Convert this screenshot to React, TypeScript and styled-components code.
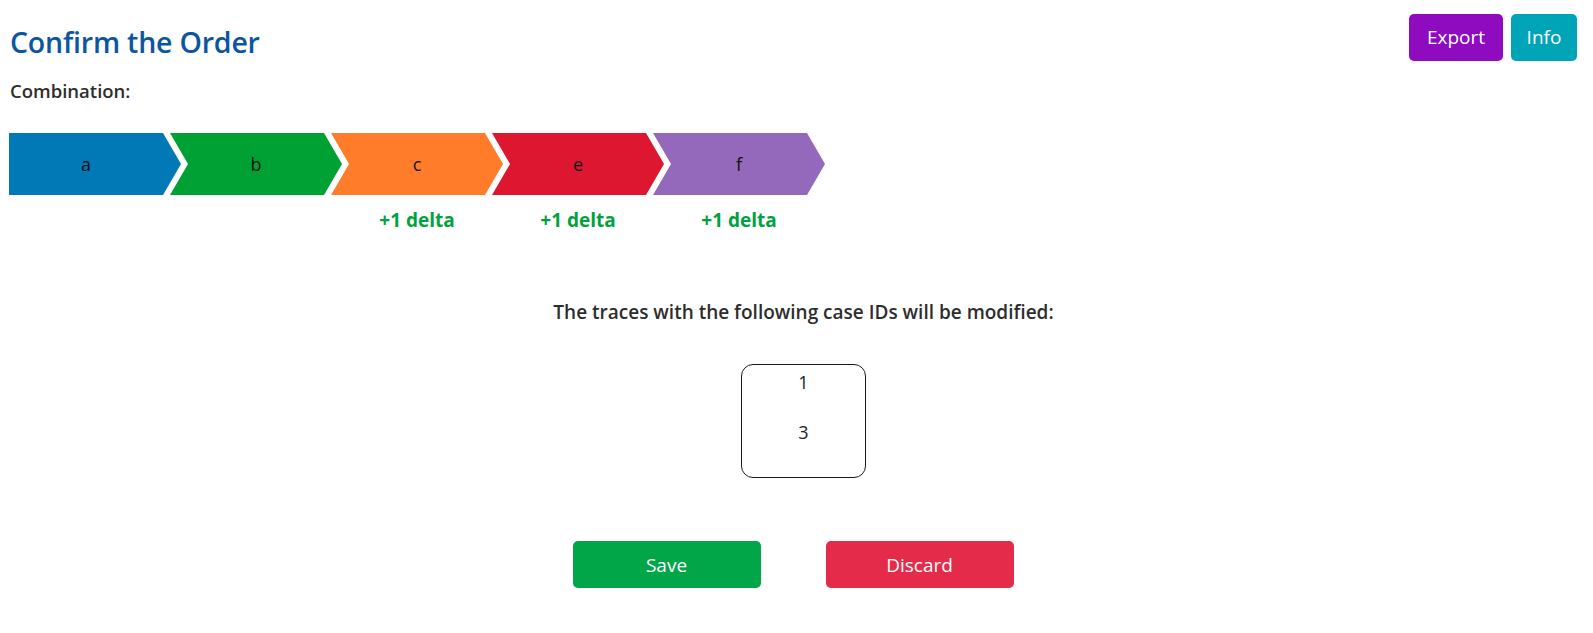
import React from "react";
import styled, { createGlobalStyle } from "styled-components";

const GlobalStyle = createGlobalStyle`
  html, body {
    margin: 0;
    padding: 0;
    background: #ffffff;
    font-family: "Open Sans", "Noto Sans", "Liberation Sans", sans-serif;
    color: #212529;
  }
  * { box-sizing: border-box; }
`;

const Page = styled.div`
  padding: 14px 16px 40px 9px;
  display: flex;
  flex-direction: column;
`;

const Header = styled.div`
  display: flex;
  justify-content: space-between;
  align-items: flex-start;
`;

const Title = styled.h2`
  margin: 11px 0 0 1px;
  font-size: 28.5px;
  font-weight: 600;
  line-height: 1.2;
  color: #0b55a1;
  letter-spacing: -0.2px;
`;

const ButtonGroup = styled.div`
  display: flex;
  gap: 8px;
`;

const TopButton = styled.button<{ $bg: string; $w: number }>`
  width: ${(p) => p.$w}px;
  height: 47px;
  padding: 0;
  border: none;
  border-radius: 5px;
  background: ${(p) => p.$bg};
  color: #ffffff;
  font-family: inherit;
  font-size: 19px;
  line-height: 1;
  cursor: pointer;
`;

const Label = styled.div`
  margin: 17px 0 0 1px;
  font-size: 18.5px;
  font-weight: 600;
  color: #2d2d2d;
`;

const ChevronRow = styled.div`
  display: flex;
  margin-top: 30px;
`;

const Column = styled.div<{ $first?: boolean }>`
  display: flex;
  flex-direction: column;
  width: 172px;
  margin-left: ${(p) => (p.$first ? "0" : "-11px")};
`;

const Chevron = styled.div<{ $color: string; $first?: boolean }>`
  height: 62px;
  background: ${(p) => p.$color};
  display: flex;
  align-items: center;
  justify-content: center;
  padding: ${(p) => (p.$first ? "0 18px 0 0" : "0 18px")};
  font-size: 18px;
  color: #111111;
  clip-path: ${(p) =>
    p.$first
      ? "polygon(0 0, calc(100% - 18px) 0, 100% 50%, calc(100% - 18px) 100%, 0 100%)"
      : "polygon(0 0, calc(100% - 18px) 0, 100% 50%, calc(100% - 18px) 100%, 0 100%, 18px 50%)"};
`;

const Delta = styled.div`
  height: 24px;
  margin-top: 13px;
  padding: 0 18px;
  text-align: center;
  font-size: 19px;
  font-weight: 700;
  line-height: 24px;
  color: #00a23f;
`;

const TraceSection = styled.div`
  display: flex;
  flex-direction: column;
  align-items: center;
  padding-left: 21px;
  margin-top: 68px;
`;

const TraceText = styled.div`
  font-size: 19px;
  font-weight: 600;
  color: #2d2d2d;
  line-height: 24px;
`;

const CaseBox = styled.div`
  margin-top: 40px;
  width: 125px;
  height: 114px;
  border: 1px solid #1a1a1a;
  border-radius: 12px;
  display: flex;
  flex-direction: column;
  align-items: center;
  padding-top: 5px;
  gap: 26px;
`;

const CaseId = styled.div`
  font-size: 18px;
  line-height: 24px;
  color: #222222;
`;

const ActionRow = styled.div`
  display: flex;
  justify-content: center;
  gap: 65px;
  margin-top: 63px;
`;

const ActionButton = styled.button<{ $bg: string }>`
  width: 188px;
  height: 47px;
  border: none;
  border-radius: 5px;
  background: ${(p) => p.$bg};
  color: #ffffff;
  font-family: inherit;
  font-size: 19px;
  cursor: pointer;
`;

const steps = [
  { name: "a", color: "#0079b6", delta: "" },
  { name: "b", color: "#00a134", delta: "" },
  { name: "c", color: "#ff7d2a", delta: "+1 delta" },
  { name: "e", color: "#dc172f", delta: "+1 delta" },
  { name: "f", color: "#9468ba", delta: "+1 delta" },
];

export default function App() {
  return (
    <>
      <GlobalStyle />
      <Page>
        <Header>
          <Title>Confirm the Order</Title>
          <ButtonGroup>
            <TopButton $bg="#8e0bc0" $w={94}>Export</TopButton>
            <TopButton $bg="#00a4b7" $w={66}>Info</TopButton>
          </ButtonGroup>
        </Header>
        <Label>Combination:</Label>
        <ChevronRow>
          {steps.map((s, i) => (
            <Column key={s.name} $first={i === 0}>
              <Chevron $color={s.color} $first={i === 0}>
                {s.name}
              </Chevron>
              <Delta>{s.delta}</Delta>
            </Column>
          ))}
        </ChevronRow>
        <TraceSection>
          <TraceText>The traces with the following case IDs will be modified:</TraceText>
          <CaseBox>
            <CaseId>1</CaseId>
            <CaseId>3</CaseId>
          </CaseBox>
        </TraceSection>
        <ActionRow>
          <ActionButton $bg="#00a648">Save</ActionButton>
          <ActionButton $bg="#e42b4a">Discard</ActionButton>
        </ActionRow>
      </Page>
    </>
  );
}
